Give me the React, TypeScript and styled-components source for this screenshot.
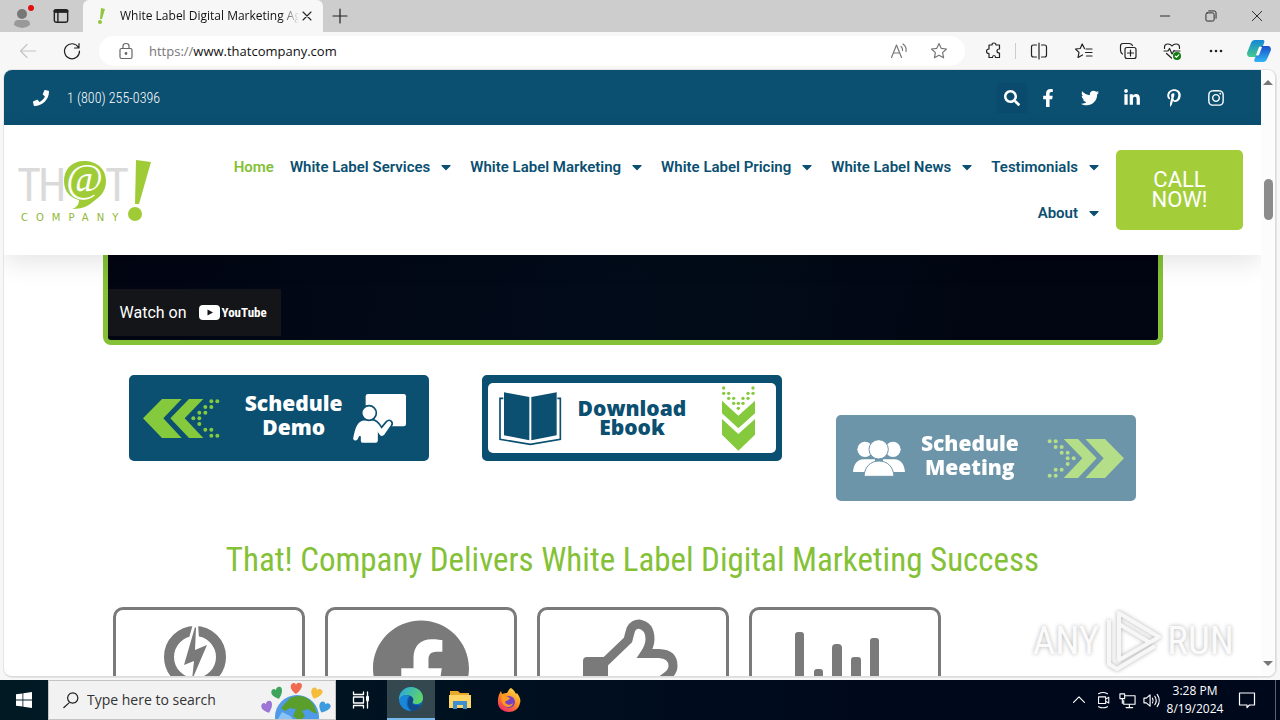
import React from "react";
import styled, { createGlobalStyle } from "styled-components";
import {
  FaFacebookF,
  FaInstagram,
  FaLinkedinIn,
  FaPhone,
  FaPinterestP,
  FaSearch,
  FaTwitter,
  FaCaretDown,
} from "react-icons/fa";

const blue = "#0b4f71";
const green = "#84c136";
const lime = "#a3ce3a";
const grey = "#7a7a7a";
const ui = `"Open Sans", "Noto Sans", sans-serif`;
const narrow = `"Liberation Sans Narrow", "Roboto Condensed", Roboto, sans-serif`;

const Global = createGlobalStyle`
  *, *::before, *::after { box-sizing: border-box; }
  body { margin: 0; font-family: ${ui}; background: #f7f7f7; }
  button { border: 0; background: none; padding: 0; font: inherit; color: inherit; }
  a { color: inherit; text-decoration: none; }
  svg { display: block; flex: none; overflow: visible; }
`;

const Desktop = styled.div`
  height: 100vh;
  display: flex;
  flex-direction: column;
  overflow: hidden;
`;

/* ---------- browser window ---------- */

const TitleBar = styled.div`
  flex: none;
  height: 32px;
  display: flex;
  align-items: center;
  background: #cdcdcd;
`;

const ChromeButton = styled.button<{ $w: number }>`
  flex: none;
  width: ${(p) => p.$w}px;
  height: 32px;
  display: flex;
  align-items: center;
  justify-content: center;
`;

const Tab = styled.div`
  width: 240px;
  height: 32px;
  display: flex;
  align-items: center;
  margin-left: 6px;
  padding: 0 8px 0 12px;
  background: #f7f7f7;
  border-radius: 6px 6px 0 0;
`;

const TabTitle = styled.div`
  flex: 1;
  margin-left: 12px;
  overflow: hidden;
  white-space: nowrap;
  font-size: 12px;
  line-height: 20px;
  color: #111;
  mask-image: linear-gradient(to right, #000 90%, transparent);
`;

const Spacer = styled.div`
  flex: 1;
`;

const Toolbar = styled.div`
  flex: none;
  height: 38px;
  display: flex;
  align-items: center;
  padding-left: 6px;
  background: #f7f7f7;
`;

const AddressBar = styled.form`
  flex: 1;
  height: 30px;
  display: flex;
  align-items: center;
  margin: 0 8px 0 5px;
  padding-left: 18px;
  padding-right: 6px;
  background: #fff;
  border-radius: 15px;
`;

const UrlField = styled.label`
  flex: 1;
  display: flex;
  margin-left: 14px;
  font-size: 13px;
  line-height: 20px;
  color: #777;
`;

const UrlInput = styled.input`
  flex: 1;
  min-width: 0;
  border: 0;
  outline: 0;
  padding: 0;
  background: none;
  font: inherit;
  color: #111;
`;

const Divider = styled.div`
  width: 1px;
  height: 16px;
  background: #ccc;
`;

const Window = styled.div`
  flex: 1;
  min-height: 0;
  display: flex;
  margin: 0 4px 3px;
  border: 1px solid #dcdcdc;
  border-width: 0 1px 1px 0;
  border-radius: 8px;
  overflow: hidden;
  background: #fff;
  box-shadow: 0 0 0 1px #e4e4e4;
`;

const Page = styled.main`
  flex: 1;
  min-width: 0;
  overflow: hidden;
`;

const ScrollTrack = styled.div`
  flex: none;
  width: 14px;
  display: flex;
  flex-direction: column;
  align-items: center;
  padding: 10px 0;
  background: #fcfcfc;
`;

const ScrollThumb = styled.div`
  width: 9px;
  height: 41px;
  margin-top: 94px;
  border-radius: 5px;
  background: #8b8b8b;
`;

/* ---------- site header ---------- */

const ContactBar = styled.div`
  height: 55px;
  display: flex;
  align-items: center;
  padding: 0 24px 0 29px;
  background: ${blue};
  color: #fff;
`;

const Phone = styled.a`
  flex: 1;
  display: flex;
  align-items: center;
  gap: 18px;
  font-family: ${narrow};
  font-weight: 300;
  font-size: 14px;
  line-height: 20px;
`;

const SearchButton = styled.button`
  width: 30px;
  height: 30px;
  display: flex;
  align-items: center;
  justify-content: center;
  background: #0a4a6c;
`;

const Social = styled.a`
  width: 42px;
  display: flex;
  justify-content: center;
`;

const Header = styled.header`
  position: relative;
  z-index: 1;
  height: 130px;
  display: flex;
  align-items: center;
  padding: 0 18px 0 14px;
  background: #fff;
  box-shadow: 0 8px 24px rgba(0, 0, 0, 0.1);
`;

const Nav = styled.nav`
  flex: 1;
  display: flex;
  flex-wrap: wrap;
  justify-content: flex-end;
  column-gap: 16px;
  margin-left: 60px;
  margin-right: 14px;
  font-family: Roboto, sans-serif;
  font-weight: 600;
  font-size: 15px;
  line-height: 46px;
`;

const NavItem = styled.a<{ $active?: boolean }>`
  display: flex;
  align-items: center;
  gap: 8px;
  white-space: nowrap;
  color: ${(p) => (p.$active ? green : blue)};
`;

const CallButton = styled.button`
  width: 127px;
  height: 80px;
  padding: 0 30px;
  border-radius: 5px;
  background: ${lime};
  color: #fff;
  font-family: Roboto, sans-serif;
  font-size: 22px;
  line-height: 20px;
`;

/* ---------- page body ---------- */

const Container = styled.div`
  max-width: 1060px;
  margin: 0 auto;
`;

const Video = styled.section`
  height: 90px;
  display: flex;
  align-items: flex-end;
  padding-bottom: 4px;
  border: 5px solid ${green};
  border-top: 0;
  border-radius: 0 0 8px 8px;
  background: linear-gradient(100deg, #020512, #020b1a 45%, #020c18 60%, #020512 85%);
`;

const WatchOn = styled.a`
  height: 47px;
  display: flex;
  align-items: center;
  gap: 12px;
  padding: 0 14px 0 12px;
  background: #131518;
  color: #fff;
  font-family: Roboto, sans-serif;
  font-size: 16px;
  line-height: 20px;
`;

const YouTube = styled.span`
  display: flex;
  align-items: center;
  gap: 2px;
  font-family: ${narrow};
  font-weight: 700;
  font-size: 13px;
`;

const Actions = styled.section`
  display: grid;
  grid-template-columns: repeat(3, 1fr);
  justify-items: center;
  align-items: start;
  padding-top: 30px;
`;

const Action = styled.a<{ $entering?: boolean; $outlined?: boolean; $pad: string }>`
  position: relative;
  isolation: isolate;
  width: 300px;
  height: 86px;
  display: flex;
  align-items: center;
  justify-content: space-between;
  padding: ${(p) => p.$pad};
  margin-top: ${(p) => (p.$entering ? 40 : 0)}px;
  opacity: ${(p) => (p.$entering ? 0.6 : 1)};
  border: solid ${blue};
  border-width: 8px 6px;
  border-radius: 5px;
  background: ${blue};
  color: ${(p) => (p.$outlined ? blue : "#fff")};
  font-family: "Open Sans", sans-serif;
  font-weight: 800;
  font-size: 21px;
  line-height: ${(p) => (p.$outlined ? 19 : 24)}px;
  text-align: center;

  &::before {
    content: "";
    position: absolute;
    inset: 0;
    z-index: -1;
    border-radius: 5px;
    background: ${(p) => (p.$outlined ? "#fff" : "none")};
  }
`;

const Lines = styled.span<{ $pad: string }>`
  display: flex;
  flex-direction: column;
  padding: ${(p) => p.$pad};
`;

const Title = styled.h2`
  margin: 29px 0 17px;
  text-align: center;
  font-family: ${narrow};
  font-weight: 400;
  font-size: 33px;
  line-height: 60px;
  color: ${green};
`;

const Cards = styled.section`
  display: grid;
  grid-template-columns: repeat(5, 1fr);
  gap: 20px;
  padding: 0 10px;
`;

const Card = styled.article`
  height: 200px;
  display: flex;
  justify-content: center;
  padding-top: 10px;
  border: 3px solid ${grey};
  border-radius: 10px;
`;

const Watermark = styled.div`
  position: absolute;
  right: 46px;
  bottom: 48px;
  display: flex;
  align-items: center;
  gap: 6px;
  font-family: ${narrow};
  font-size: 39px;
  line-height: 62px;
  color: #fbfbfb;
  text-shadow: 0 0 4px rgba(0, 0, 0, 0.3);
  pointer-events: none;
  z-index: 2;
`;

/* ---------- taskbar ---------- */

const Taskbar = styled.footer`
  flex: none;
  height: 40px;
  display: flex;
  align-items: stretch;
  background: linear-gradient(90deg, #001a24, #00081c 70%);
  color: #fff;
`;

const TaskButton = styled.button<{ $w: number; $active?: boolean }>`
  width: ${(p) => p.$w}px;
  display: flex;
  align-items: center;
  justify-content: center;
  background: ${(p) => (p.$active ? "#34484f" : "none")};
  border-bottom: ${(p) => (p.$active ? "2px solid #76b9ed" : "0")};
`;

const TaskSearch = styled.label`
  width: 288px;
  margin-right: 1px;
  display: flex;
  align-items: center;
  gap: 8px;
  padding: 0 5px 0 14px;
  background: #f2f2f2;
  border: 1px solid #c4c4c4;
  overflow: hidden;
`;

const TaskInput = styled.input`
  flex: 1;
  min-width: 0;
  border: 0;
  outline: 0;
  padding: 0;
  background: none;
  font-family: ${ui};
  font-size: 14px;
  line-height: 20px;
  color: #333;
  &::placeholder { color: #333; opacity: 1; }
`;

const Clock = styled.div`
  width: 64px;
  align-self: center;
  text-align: center;
  font-size: 12px;
  line-height: 18px;
`;

const TaskGap = styled.div`
  width: 2px;
`;

const TrayEdge = styled.div`
  width: 5px;
  margin-left: 8px;
  border-left: 1px solid #5a6070;
`;

/* ---------- drawings ---------- */

const Line = ({ d, size = 18, color = "#222", w = 1.2, children }: {
  d?: string; size?: number; color?: string; w?: number; children?: React.ReactNode;
}) => (
  <svg width={size} height={size} viewBox="0 0 18 18" fill="none" stroke={color} strokeWidth={w} strokeLinecap="round" strokeLinejoin="round">
    {d && <path d={d} />}
    {children}
  </svg>
);

const starPath = "M9 1.5 11.2 6.3 16.5 7 12.6 10.6 13.6 15.8 9 13.2 4.4 15.8 5.4 10.6 1.5 7 6.8 6.3Z";

const Chevrons = ({ flip }: { flip?: boolean }) => {
  const dots = [[205, 7], [223, 7], [187, 24], [205, 24], [169, 41], [187, 41], [151, 58], [169, 58], [169, 75], [187, 92], [205, 92], [205, 110], [223, 110]];
  return (
    <svg width="77" height="39" viewBox="0 0 231 117" fill="#85c93c">
      <g transform={flip ? "matrix(-1 0 0 1 231 0)" : undefined}>
        <path d="M0 58 57 0H116L61 58 116 117H57Z" />
        <path d="M82 58 138 0H181L125 58 181 117H138Z" />
        {dots.map(([x, y]) => <circle key={`${x}-${y}`} cx={x} cy={y} r="6" />)}
      </g>
    </svg>
  );
};

const Presenter = () => (
  <svg width="53" height="49" viewBox="727 101 159 147" fill="#fff">
    <rect x="765" y="101" width="121" height="97" rx="7" />
    <path stroke={blue} strokeWidth="5" d="M725 233C731 203 738 178 762 178H784C798 178 806 190 813 201L827 184C837 174 850 185 842 197L823 224C816 233 808 229 804 223V240Q804 250 795 250H757Q748 250 748 241V228L743 238C737 246 724 244 725 233Z" />
    <circle cx="775" cy="158" r="22" stroke={blue} strokeWidth="5" />
  </svg>
);

const Book = () => (
  <svg width="62" height="53" viewBox="87 92 186 159" fill={blue}>
    <path d="M102 93 178 107V237L102 222Z" />
    <path d="M260 93 184 107V237L260 222Z" />
    <path d="M100 111H90V234L181 249 271 234V111H262" fill="none" stroke={blue} strokeWidth="5" />
  </svg>
);

const DownChevrons = () => {
  const dots = [[760, 82], [848, 82], [760, 98], [775, 98], [833, 98], [848, 98], [775, 113], [790, 113], [818, 113], [833, 113], [790, 128], [804, 128], [818, 128], [804, 143]];
  return (
    <svg width="33" height="65" viewBox="755 76 99 195" fill="#85c93c">
      <path d="M755 120 804 165 854 120V158L804 203 755 158Z" />
      <path d="M755 175 804 220 854 175V222L804 270 755 222Z" />
      {dots.map(([x, y]) => <circle key={`${x}-${y}`} cx={x} cy={y} r="5" />)}
    </svg>
  );
};

const People = () => (
  <svg width="52" height="36" viewBox="99 120 156 108" fill="#fff" stroke={blue} strokeWidth="3">
    <circle cx="135" cy="148" r="23" stroke="none" />
    <circle cx="219" cy="148" r="23" stroke="none" />
    <path stroke="none" d="M99 216C101 190 115 178 130 178H165V216ZM255 216C253 190 239 178 224 178H189V216Z" />
    <path d="M132 229C134 200 152 183 177 183S220 200 222 229Z" />
    <circle cx="176" cy="148" r="29" />
  </svg>
);

const Logo = () => (
  <svg width="136" height="68" viewBox="0 -4 136 68" role="img" aria-label="That! Company">
    <g fill="#dadada" fontFamily={narrow} fontSize="46">
      <text x="-1" y="41" fontSize="46">T</text>
      <text x="20" y="41">H</text>
      <text x="87" y="41">T</text>
    </g>
    <path fill="#9fcc36" d="M66 1C79 1 88 9 88 21 88 33 80 38 76 41 71 45 67 49 54 49 60 47 61 43 61 40 52 38 46 31 46 21 46 9 54 1 66 1Z" />
    <text x="48" y="31" fill="#fff" fontFamily='"Liberation Serif", serif' fontStyle="italic" fontSize="40">@</text>
    <path fill="#9fcc36" d="M118 0 133 2 121 44H117Z" />
    <circle cx="117" cy="54" r="7" fill="#9fcc36" />
    <text x="3" y="61" fill="#8fb836" fontFamily='"DejaVu Sans", sans-serif' fontSize="10" letterSpacing="8">COMPANY</text>
  </svg>
);

const Globe = () => (
  <svg width="70" height="38" viewBox="0 0 70 38">
    <circle cx="37" cy="36" r="22" fill="#4f9be8" />
    <path d="M30 17Q45 11 54 24L57 33 52 31 48 28 42 30 45 35 40 40 33 35 36 28 30 27 25 30 21 27Z" fill="#5a9e2c" />
    <path d="M22 31 30 35 33 38H18Z" fill="#8cc3f7" />
    {[["#3fa45b", 12, 7, -20], ["#ef6a50", 31, 2, 0], ["#f4bd3a", 51, 7, 20], ["#9c76d6", 2, 21, -20], ["#3d9be0", 59, 21, 25]].map(([c, x, y, r]) => (
      <path key={String(c)} fill={String(c)} transform={`translate(${x} ${y}) rotate(${r} 5 5)`} d="M5 11C1 8-1 5 0 2 1 0 4-1 5 2 6-1 10-1 11 2 11 5 9 8 5 11Z" />
    ))}
  </svg>
);

const Edge = () => (
  <svg width="24" height="24" viewBox="0 0 24 24">
    <defs>
      <linearGradient id="edgeTop" x1="0" y1="0" x2="1" y2="0.4">
        <stop offset="0" stopColor="#27a5e6" />
        <stop offset="1" stopColor="#5ed36b" />
      </linearGradient>
    </defs>
    <circle cx="12" cy="12" r="12" fill="#1166b8" />
    <path d="M0 11C1 4 6 0 12 0 19 0 24 5 24 11 24 15 21 17 17 17 14 17 13 16 14 14 15 11 12 8 8 8 4 8 1 10 0 14Z" fill="url(#edgeTop)" />
    <path d="M8 8C4 8 1 10 0 13 1 20 6 24 13 24 7 22 6 14 10 9Z" fill="#1a86d8" />
    <path d="M14 14C12 17 15 19 22 18 20 22 16 24 13 24 8 21 8 14 11 9 14 10 15 12 14 14Z" fill="#114a8b" />
  </svg>
);

const Folder = () => (
  <svg width="22" height="20" viewBox="0 0 22 20">
    <path d="M1 1H9L11 3H20V18H1Z" fill="#e8a92c" />
    <path d="M0 5H22V18H0Z" fill="#ffd566" />
    <path d="M4 11H18V19H14V15H8V19H4Z" fill="#3e8fd0" />
  </svg>
);

const Firefox = () => (
  <svg width="24" height="24" viewBox="0 0 24 24">
    <defs>
      <linearGradient id="fox" x1="0.8" y1="0" x2="0.2" y2="1">
        <stop offset="0" stopColor="#ffe14d" />
        <stop offset="0.5" stopColor="#ff8a1f" />
        <stop offset="1" stopColor="#f0246e" />
      </linearGradient>
    </defs>
    <path fill="url(#fox)" d="M14 0C17 2 18 4 19 6L20 5C23 9 24 12 23 15 22 21 17 24 12 24 5 24 0 19 1 12 1 9 2 6 4 3L5 6C7 5 9 5 10 5 11 3 12 1 14 0Z" />
    <circle cx="12" cy="14" r="6" fill="#7542c4" />
    <path fill="#ff9a22" d="M5 7C8 7 10 9 13 10 12 13 9 12 8 14 9 17 13 18 16 15 15 20 8 20 6 16 4 13 4 10 5 7Z" />
  </svg>
);

const Copilot = () => (
  <svg width="24" height="24" viewBox="0 0 24 24">
    <defs>
      <linearGradient id="copA" x1="0" y1="0" x2="0" y2="1">
        <stop offset="0" stopColor="#1687d9" />
        <stop offset="1" stopColor="#45c98c" />
      </linearGradient>
      <linearGradient id="copB" x1="0" y1="0" x2="0" y2="1">
        <stop offset="0" stopColor="#1b50c8" />
        <stop offset="1" stopColor="#31b5f5" />
      </linearGradient>
    </defs>
    <path d="M8 1H16Q18 1 17 4L13 15Q12 18 9 18H3Q0 18 0 14L4 4Q5 1 8 1Z" fill="url(#copA)" />
    <path d="M16 7H21Q24 7 24 11L20 20Q19 23 16 23H9Q6 23 8 19L12 10Q13 7 16 7Z" fill="url(#copB)" />
    <path d="M12 8 9 16Q10 17 12 16L15 8Q13 7 12 8Z" fill="#fff" />
  </svg>
);

const CardArt = ({ children }: { children: React.ReactNode }) => (
  <svg width="96" height="96" viewBox="0 0 96 96" fill={grey}>{children}</svg>
);

const navItems = ["White Label Services", "White Label Marketing", "White Label Pricing", "White Label News", "Testimonials", "About"];

export default function App() {
  return (
    <Desktop>
      <Global />
      <TitleBar>
        <ChromeButton $w={44} aria-label="Profile">
          <svg width="20" height="24" viewBox="0 0 20 24">
            <circle cx="10" cy="10" r="5" fill="#777" />
            <path d="M2 21Q2 16 6 16H14Q18 16 18 21 14 24 10 24T2 21Z" fill="#999" />
            <circle cx="19" cy="4" r="3" fill="#e01010" />
          </svg>
        </ChromeButton>
        <ChromeButton $w={33} aria-label="Tab actions">
          <Line size={16} w={1.6} d="M3.500 2H14.500Q16.500 2 16.500 4V14Q16.500 16 14.500 16H3.500Q1.500 16 1.500 14V4Q1.500 2 3.500 2ZM2 4.500H16M5.500 5V15.500">
            <path d="M2 3.500H16" strokeWidth="3" />
          </Line>
        </ChromeButton>
        <Tab>
          <svg width="13" height="17" viewBox="0 0 13 17" fill="#8fc63c">
            <path d="M6 0 10 1 7 11H5Z" />
            <circle cx="5" cy="14" r="2" />
          </svg>
          <TabTitle>White Label Digital Marketing Ag</TabTitle>
          <button aria-label="Close tab"><Line size={16} d="M4.500 4.500 13.500 13.500M13.500 4.500 4.500 13.500" /></button>
        </Tab>
        <ChromeButton $w={34} aria-label="New tab"><Line size={18} d="M9 2V16M2 9H16" /></ChromeButton>
        <Spacer />
        <ChromeButton $w={46} aria-label="Minimize"><Line size={14} d="M3 9H15" /></ChromeButton>
        <ChromeButton $w={46} aria-label="Restore">
          <Line size={14} d="M4 5H11Q13 5 13 7V14Q13 15.500 11 15.500H4Q2.500 15.500 2.500 14V7Q2.500 5 4 5ZM6 2.500H13Q15.500 2.500 15.500 5V12" />
        </ChromeButton>
        <ChromeButton $w={46} aria-label="Close"><Line size={14} d="M3 3 15 15M15 3 3 15" /></ChromeButton>
      </TitleBar>

      <Toolbar>
        <ChromeButton $w={44} aria-label="Back"><Line color="#c4c4c4" d="M16.500 9H1.500M8 2.500 1.500 9 8 15.500" /></ChromeButton>
        <ChromeButton $w={44} aria-label="Reload">
          <Line d="M15.500 5.500A7.500 7.500 0 1 0 16.500 9M16 1.500V6H11.500" />
        </ChromeButton>
        <AddressBar>
          <Line size={18} color="#666" d="M4.500 6.500H13.500Q15 6.500 15 8V15Q15 16.500 13.500 16.500H4.500Q3 16.500 3 15V8Q3 6.500 4.500 6.500ZM6 6.500V4Q6 1.500 9 1.500T12 4V6.500">
            <circle cx="9" cy="11.500" r="0.800" fill="#666" />
          </Line>
          <UrlField>
            https://
            <UrlInput aria-label="Address" defaultValue="www.thatcompany.com" />
          </UrlField>
          <ChromeButton type="button" $w={40} aria-label="Read aloud">
            <Line color="#777" d="M1.500 15.500 6.500 3 11.500 15.500M3.500 11H9.500M11 4.500Q13 6 12.500 8.500M13 2Q17 5 16 9.500" />
          </ChromeButton>
          <ChromeButton type="button" $w={40} aria-label="Add to favorites"><Line color="#777" d={starPath} /></ChromeButton>
        </AddressBar>
        <ChromeButton $w={42} aria-label="Extensions">
          <Line d="M4 3H7Q7 1 9 1T11 3H14.500V7Q12 7 12 9T14.500 11V15.500H10.500Q10.500 13.500 9 13.500T7.500 15.500H4V11.500Q1.500 11.500 1.500 9.300T4 7Z" />
        </ChromeButton>
        <Divider />
        <ChromeButton $w={46} aria-label="Split screen">
          <Line d="M9 1V17M6.500 3H3.500Q1.500 3 1.500 5V13Q1.500 15 3.500 15H6.500M11.500 3H14.500Q16.500 3 16.500 5V13Q16.500 15 14.500 15H11.500" />
        </ChromeButton>
        <ChromeButton $w={44} aria-label="Favorites">
          <Line d="M9.500 6.500 7.200 2 5.200 6.500.5 7 4 10.400 3 15.500 7.500 13M11 7H17M10.500 10.500H17M11.500 14H17" />
        </ChromeButton>
        <ChromeButton $w={44} aria-label="Collections">
          <Line d="M8 5.500H15Q17 5.500 17 7.500V14.500Q17 16.500 15 16.500H8Q6 16.500 6 14.500V7.500Q6 5.500 8 5.500ZM11.500 8V14M8.500 11H14.500M3.500 12Q1.500 11 1.500 8V4Q1.500 1.500 4 1.500H10Q12.500 1.500 13.500 3.500" />
        </ChromeButton>
        <ChromeButton $w={44} aria-label="Browser essentials">
          <Line d="M1 9H5L6.500 6.500 9 12 11 8.500 12 9H17M1.500 6.500Q1 2 5 2 7.500 2 9 4 10.500 2 13 2 17 2 16.500 6.500M3.500 11.500 8.500 16">
            <circle cx="14" cy="14" r="4" fill="#107c10" stroke="none" />
            <path d="M12.300 14.200 13.500 15.300 15.700 12.800" stroke="#fff" />
          </Line>
        </ChromeButton>
        <ChromeButton $w={44} aria-label="More">
          <svg width="14" height="4" viewBox="0 0 14 4" fill="#222"><circle cx="2" cy="2" r="1.300" /><circle cx="7" cy="2" r="1.300" /><circle cx="12" cy="2" r="1.300" /></svg>
        </ChromeButton>
        <ChromeButton $w={42} aria-label="Copilot"><Copilot /></ChromeButton>
      </Toolbar>

      <Window>
        <Page>
          <ContactBar>
            <Phone href="tel:18002550396"><FaPhone size={16} />1 (800) 255-0396</Phone>
            <SearchButton aria-label="Search"><FaSearch size={16} /></SearchButton>
            <Social href="#" aria-label="Facebook"><FaFacebookF size={18} /></Social>
            <Social href="#" aria-label="Twitter"><FaTwitter size={18} /></Social>
            <Social href="#" aria-label="LinkedIn"><FaLinkedinIn size={18} /></Social>
            <Social href="#" aria-label="Pinterest"><FaPinterestP size={18} /></Social>
            <Social href="#" aria-label="Instagram"><FaInstagram size={18} /></Social>
          </ContactBar>
          <Header>
            <a href="#"><Logo /></a>
            <Nav>
              <NavItem href="#" $active>Home</NavItem>
              {navItems.map((label) => (
                <NavItem key={label} href="#">{label}<FaCaretDown size={16} /></NavItem>
              ))}
            </Nav>
            <CallButton>CALL NOW!</CallButton>
          </Header>

          <Container>
            <Video>
              <WatchOn href="#">
                Watch on
                <YouTube>
                  <svg width="21" height="15" viewBox="0 0 21 15"><rect width="21" height="15" rx="4" fill="#fff" /><path d="M8.500 4.500 14 7.500 8.500 10.500Z" fill="#131518" /></svg>
                  YouTube
                </YouTube>
              </WatchOn>
            </Video>
            <Actions>
              <Action href="#" $pad="0 17px 0 8px">
                <Chevrons />
                <Lines $pad="0 0 6px 14px"><span>Schedule</span><span>Demo</span></Lines>
                <Presenter />
              </Action>
              <Action href="#" $outlined $pad="0 21px 0 11px">
                <Book />
                <Lines $pad="0 20px 0 0"><span>Download</span><span>Ebook</span></Lines>
                <DownChevrons />
              </Action>
              <Action href="#" $entering $pad="0 6px 0 11px">
                <People />
                <Lines $pad="0 12px 6px 0"><span>Schedule</span><span>Meeting</span></Lines>
                <Chevrons flip />
              </Action>
            </Actions>
            <Title>That! Company Delivers White Label Digital Marketing Success</Title>
            <Cards>
              <Card>
                <CardArt>
                  <circle cx="34" cy="37" r="26" fill="none" stroke={grey} strokeWidth="10" />
                  <path d="M32 4H37L38 18H28ZM30 54H36L33 70H28Z" fill="#fff" />
                  <path d="M34 7 23 45 33 41 31 60 46 25 34 30 35 8Z" />
                </CardArt>
              </Card>
              <Card>
                <CardArt>
                  <g transform="scale(0.1935) translate(-8 -6)">
                    <path d="M504 256C504 119 393 8 256 8S8 119 8 256c0 123.780 90.690 226.380 209.250 245V327.690h-63V256h63v-54.640c0-62.150 37-96.480 93.670-96.480 27.140 0 55.520 4.840 55.520 4.840v61h-31.280c-30.800 0-40.410 19.120-40.410 38.730V256h68.780l-11 71.690h-57.780V501C413.310 482.380 504 379.780 504 256z" />
                  </g>
                </CardArt>
              </Card>
              <Card>
                <CardArt>
                  <path d="M2 37H23V96H-2V41Q-2 37 2 37Z" />
                  <path d="M20 42 43 20Q45 12 46 9 49 4 54 4 65 6 65 19 65 26 60 33.500H74Q88 34 88 46 88 52 81 57 86 62 84 70" fill="none" stroke={grey} strokeWidth="9" />
                </CardArt>
              </Card>
              <Card>
                <CardArt>
                  <rect x="-2" y="12" width="9" height="84" rx="3" />
                  <rect x="17" y="49" width="9" height="47" rx="3" />
                  <rect x="35" y="24" width="10" height="72" rx="4" />
                  <rect x="54" y="37" width="10" height="59" rx="3" />
                  <rect x="73" y="18" width="9" height="78" rx="3" />
                </CardArt>
              </Card>
            </Cards>
          </Container>
        </Page>
        <ScrollTrack>
          <svg width="10" height="5" viewBox="0 0 10 5" fill="#777"><path d="M5 0 10 5H0Z" /></svg>
          <ScrollThumb />
          <Spacer />
          <svg width="10" height="5" viewBox="0 0 10 5" fill="#777"><path d="M5 5 0 0H10Z" /></svg>
        </ScrollTrack>
      </Window>

      <Watermark>
        <span>ANY</span>
        <svg width="56" height="62" viewBox="0 0 56 62" fill="none" stroke="#f7f7f7" strokeWidth="4" strokeLinejoin="round" filter="drop-shadow(0 0 2px rgba(0,0,0,0.3))">
          <path d="M14 3 54 27 14 50ZM4 10V54L12 59 50 36M14 14 44 32" />
        </svg>
        <span>RUN</span>
      </Watermark>

      <Taskbar>
        <TaskButton $w={48} aria-label="Start">
          <svg width="16" height="16" viewBox="0 0 16 16" fill="#fff"><path d="M0 2.300 6.500 1.400V7.600H0ZM7.300 1.300 16 0V7.600H7.300ZM0 8.400H6.500V14.600L0 13.700ZM7.300 8.400H16V16L7.300 14.700Z" /></svg>
        </TaskButton>
        <TaskSearch>
          <Line size={16} w={1.400} d="M6.500 12.500 1 17.500M11 1A5.800 5.800 0 1 1 10.900 1Z" />
          <TaskInput placeholder="Type here to search" aria-label="Type here to search" />
          <Globe />
        </TaskSearch>
        <TaskButton $w={48} aria-label="Task view">
          <Line size={18} color="#fff" w={1.300} d="M1.500 1V3.500H11.500V1M1.500 17V14.500H11.500V17M1.500 6H11.500V12H1.500ZM15.500 1V17">
            <path d="M15.500 6V9" strokeWidth="3" />
          </Line>
        </TaskButton>
        <TaskGap />
        <TaskButton $w={48} $active aria-label="Microsoft Edge"><Edge /></TaskButton>
        <TaskButton $w={49} aria-label="File Explorer"><Folder /></TaskButton>
        <TaskButton $w={49} aria-label="Firefox"><Firefox /></TaskButton>
        <Spacer />
        <TaskButton $w={24} aria-label="Show hidden icons"><Line size={14} color="#fff" w={1.500} d="M2 12 9 5 16 12" /></TaskButton>
        <TaskButton $w={24} aria-label="Camera">
          <Line size={16} color="#fff" d="M4 5.500H12V13H4ZM12 8 15.500 6V12.500L12 10.500M4 2Q9-1 14 2M4 16.500Q9 19 14 16.500" />
        </TaskButton>
        <TaskButton $w={24} aria-label="Network">
          <Line size={17} color="#fff" d="M6 4H17V13H5V9M11 13V16.500M7.500 16.500H14.500M1 2H6V7H1ZM3.500 7V12" />
        </TaskButton>
        <TaskButton $w={24} aria-label="Volume">
          <Line size={17} color="#fff" d="M1 6.500H3.500L7.500 3V15L3.500 11.500H1ZM10 6.500Q11.500 9 10 11.500M12.500 4.500Q15.500 9 12.500 13.500M15 2.500Q19.500 9 15 15.500" />
        </TaskButton>
        <Clock>3:28 PM<br />8/19/2024</Clock>
        <TaskButton $w={40} aria-label="Notifications">
          <Line size={18} color="#fff" d="M1.500 2H16.500V14H11.500L9 16.500V14H1.500Z" />
        </TaskButton>
        <TrayEdge />
      </Taskbar>
    </Desktop>
  );
}
